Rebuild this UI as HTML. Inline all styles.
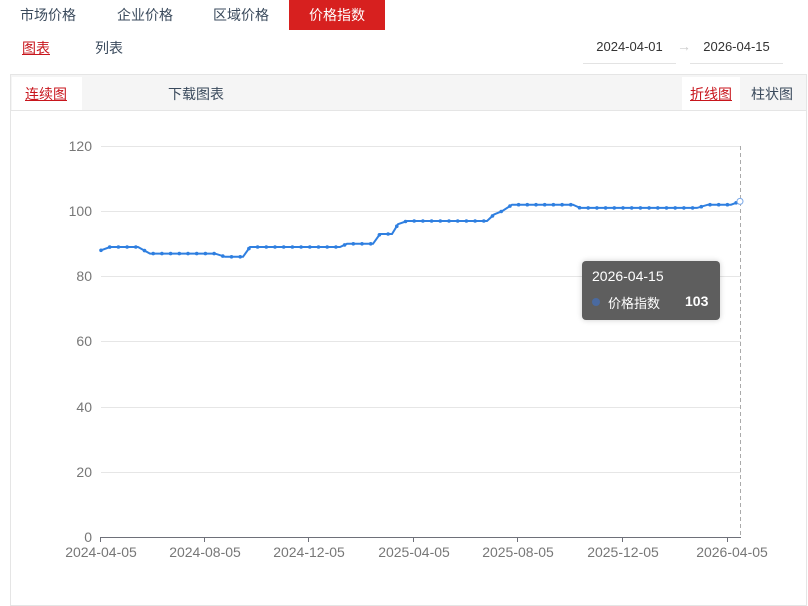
<!DOCTYPE html>
<html><head><meta charset="utf-8"><style>
body{margin:0;width:808px;height:593px;overflow:hidden;background:#fff;font-family:"Liberation Sans","Noto Sans CJK SC",sans-serif;font-size:14px;color:#333;position:relative}
.a{position:absolute;white-space:nowrap}
.tab{top:0;height:30px;line-height:30px;color:#3a4a5c}
.red{color:#c8161d;text-decoration:underline}
</style></head><body>
<div class="a tab" style="left:20px">市场价格</div>
<div class="a tab" style="left:117px">企业价格</div>
<div class="a tab" style="left:213px">区域价格</div>
<div class="a tab" style="left:289px;width:96px;background:#d7201f;color:#fff;text-align:center">价格指数</div>
<div class="a red" style="left:22px;top:38px">图表</div>
<div class="a" style="left:95px;top:38px;color:#3a4a5c">列表</div>
<div class="a" style="left:583px;top:39px;width:93px;height:24px;border-bottom:1px solid #e3e3e3;text-align:center;font-size:13px">2024-04-01</div>
<div class="a" style="left:677px;top:38px;color:#ccc">→</div>
<div class="a" style="left:690px;top:39px;width:93px;height:24px;border-bottom:1px solid #e3e3e3;text-align:center;font-size:13px">2026-04-15</div>
<div class="a" style="left:10px;top:74px;width:795px;height:530px;border:1px solid #e5e5e5;"></div>
<div class="a" style="left:11px;top:75px;width:795px;height:35px;background:#f5f5f5;border-bottom:1px solid #e5e5e5"></div>
<div class="a" style="left:12px;top:77px;width:70px;height:33px;background:#fff"></div>
<div class="a red" style="left:25px;top:84px">连续图</div>
<div class="a" style="left:168px;top:84px;color:#3a4a5c">下载图表</div>
<div class="a" style="left:682px;top:77px;width:58px;height:33px;background:#fff"></div>
<div class="a red" style="left:690px;top:84px">折线图</div>
<div class="a" style="left:751px;top:84px;color:#3a4a5c">柱状图</div>
<svg class="a" style="left:0;top:0" width="808" height="593" id="s">
<g stroke="#e6e6e6" stroke-width="1">
<line x1="101" x2="741" y1="146.5" y2="146.5"/><line x1="101" x2="741" y1="211.5" y2="211.5"/><line x1="101" x2="741" y1="276.5" y2="276.5"/><line x1="101" x2="741" y1="341.5" y2="341.5"/><line x1="101" x2="741" y1="407.5" y2="407.5"/><line x1="101" x2="741" y1="472.5" y2="472.5"/>
</g>
<line x1="100" x2="741" y1="537.5" y2="537.5" stroke="#6e7079"/>
<g stroke="#6e7079"><line x1="100.5" x2="100.5" y1="537" y2="542"/><line x1="204.5" x2="204.5" y1="537" y2="542"/><line x1="308.5" x2="308.5" y1="537" y2="542"/><line x1="413.5" x2="413.5" y1="537" y2="542"/><line x1="517.5" x2="517.5" y1="537" y2="542"/><line x1="622.5" x2="622.5" y1="537" y2="542"/><line x1="727.5" x2="727.5" y1="537" y2="542"/></g>
<line x1="740.5" x2="740.5" y1="146" y2="537" stroke="#aaa" stroke-dasharray="4,3"/>
<g fill="#777" font-size="14" text-anchor="end" font-family="Liberation Sans,sans-serif">
<text x="92" y="151">120</text><text x="92" y="216">100</text><text x="92" y="281">80</text><text x="92" y="346">60</text><text x="92" y="412">40</text><text x="92" y="477">20</text><text x="92" y="542">0</text></g>
<g fill="#777" font-size="14" text-anchor="middle" font-family="Liberation Sans,sans-serif">
<text x="101" y="557">2024-04-05</text><text x="205" y="557">2024-08-05</text><text x="309" y="557">2024-12-05</text><text x="414" y="557">2025-04-05</text><text x="518" y="557">2025-08-05</text><text x="623" y="557">2025-12-05</text><text x="732" y="557">2026-04-05</text></g>
<polyline id="ln" fill="none" stroke="#2f7fe0" stroke-width="2"/>
<g id="dots" fill="#2f7fe0"></g>
<circle cx="740" cy="201.4" r="3" fill="#fff" stroke="#7aa8e8"/>
</svg>
<div class="a" style="left:582px;top:261px;width:138px;height:59px;background:#5e5e5e;border-radius:4px;box-shadow:0 0 6px rgba(0,0,0,.2);color:#fff">
<div class="a" style="left:10px;top:7px;font-size:14px">2026-04-15</div>
<div class="a" style="left:10px;top:37px;width:8px;height:8px;border-radius:50%;background:#4a6aa0"></div>
<div class="a" style="left:26px;top:32px;font-size:13px">价格指数</div>
<div class="a" style="left:103px;top:32px;font-size:14px;font-weight:bold">103</div>
</div>
<script>
var P=[[101,88],[110,89],[138,89],[150,87],[215,87],[225,86],[243,86],[250,89],[340,89],[347,90],[373,90],[380,93],[392,93],[398,96],[407,97],[487,97],[494,99],[502,100],[512,102],[573,102],[580,101],[697,101],[708,102],[731,102],[740,103]];
function y(v){return 537-v*3.258}
document.getElementById('ln').setAttribute('points',P.map(function(p){return p[0]+','+y(p[1]).toFixed(1)}).join(' '));
var g=document.getElementById('dots'),h='';
for(var x=101;x<738;x+=8.7){var i=0;while(i<P.length-2&&P[i+1][0]<x)i++;var a=P[i],b=P[i+1];var v=a[1]+(b[1]-a[1])*(x-a[0])/(b[0]-a[0]);h+='<circle cx="'+x.toFixed(1)+'" cy="'+y(v).toFixed(1)+'" r="1.8"/>';}
g.innerHTML=h;
</script>
</body></html>
